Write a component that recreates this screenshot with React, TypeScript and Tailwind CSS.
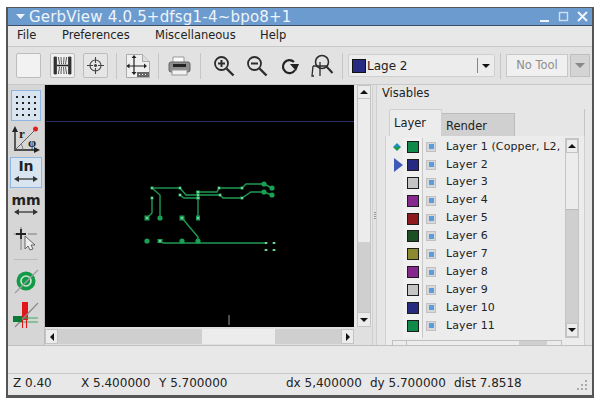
import React from 'react';

const FONT = "font-['DejaVu_Sans',sans-serif]";

const layers = [
  { name: 'Layer 1 (Copper, L2,', color: '#0f8a4a' },
  { name: 'Layer 2', color: '#262a80' },
  { name: 'Layer 3', color: '#c4c4c4' },
  { name: 'Layer 4', color: '#852a8c' },
  { name: 'Layer 5', color: '#8c1a1e' },
  { name: 'Layer 6', color: '#1c4f24' },
  { name: 'Layer 7', color: '#8c8a30' },
  { name: 'Layer 8', color: '#852a8c' },
  { name: 'Layer 9', color: '#c4c4c4' },
  { name: 'Layer 10', color: '#262a80' },
  { name: 'Layer 11', color: '#0f8a4a' },
  { name: 'Layer 12', color: '#222222' },
];

const traces = [
  '153,188 181,188',
  '153,188 161,195 161,218',
  '153,198 153,213 148,218',
  '181,188 187,195 221,195',
  '181,195 185,198 199,198',
  '199,192 218,192 220,188 243,188 247,184 265,184 273,188',
  '199,192 199,218',
  '221,195 224,198 243,198 252,192 265,192 273,195',
  '183,218 199,237 199,241',
  '161,241 164,243 267,243',
];

const roundPads = [[265, 184, 2.6], [273, 188, 2.6], [265, 192, 2.6], [273, 195, 2.6], [148, 241, 2.6], [183, 241, 2.6], [199, 241, 2.6], [161, 218, 2.6]];
const squarePads = [[148, 218, 5, 5], [183, 218, 5, 5], [199, 218, 4, 5], [161, 241, 5, 4], [153, 188, 3, 3], [181, 188, 3, 3], [181, 195, 3, 3], [153, 198, 3, 3], [199, 192, 4, 3], [199, 195, 3, 3], [199, 198, 4, 3], [221, 195, 3, 3], [220, 188, 3, 3], [243, 188, 3, 3], [243, 198, 3, 3], [267, 243, 3, 2], [275, 243, 3, 2], [267, 250, 3, 2], [275, 250, 3, 2]];

const Arrow = ({ dir }: { dir: 'up' | 'down' | 'left' | 'right' }) => {
  const points = { up: '0,6 4,2 8,6', down: '0,2 8,2 4,6', left: '6,0 6,8 2,4', right: '2,0 2,8 6,4' }[dir];
  return (
    <svg width="8" height="8" viewBox="0 0 8 8">
      <polygon points={points} fill="#111" />
    </svg>
  );
};

const ScrollBtn = ({ dir, className }: { dir: 'up' | 'down' | 'left' | 'right'; className: string }) => (
  <div className={`flex items-center justify-center shrink-0 bg-[#ececec] border border-[#c4c4c4] ${className}`}>
    <Arrow dir={dir} />
  </div>
);

const Sep = () => <div className="w-px h-[26px] bg-[#c6c6c6] shrink-0" />;

const TopToolbar = () => (
  <div className="h-[38px] shrink-0 flex items-center pl-[8px] bg-[#e2e2e2] border-b border-[#c8c8c8]">
    <div className="w-[25px] h-[25px] bg-[#f2f2f2] border border-[#bdbdbd] rounded-[2px]" />
    <div className="ml-[9px] w-[25px] h-[25px] bg-[#f0f0f0] border border-[#bdbdbd] rounded-[2px] flex items-center justify-center">
      <svg width="21" height="21" viewBox="0 0 21 21" fill="none" stroke="#333" strokeWidth="0.800">
        <path d="M2 2h2.500v17H2z" fill="#333" />
        <path d="M16.500 2H19v17h-2.500z" fill="#333" />
        <path d="M5 10.500h11" strokeWidth="1.600" stroke="#222" />
        <path d="M6.500 2c0 3 1 5 1 7M9 2c0 3 .500 5 .500 7M12 2c0 3-.500 5-.500 7M14.500 2c0 3-1 5-1 7" />
        <path d="M6.500 19c0-3 1-5 1-7M9 19c0-3 .500-5 .500-7M12 19c0-3-.500-5-.500-7M14.500 19c0-3-1-5-1-7" />
      </svg>
    </div>
    <div className="ml-[8px] w-[25px] h-[25px] bg-[#e6e6e6] border border-[#bdbdbd] rounded-[2px] flex items-center justify-center">
      <svg width="19" height="19" viewBox="0 0 19 19" fill="none" stroke="#444" strokeWidth="1.100">
        <circle cx="9.500" cy="9.500" r="5.500" />
        <path d="M9.500 1v6M9.500 12v6M1 9.500h6M12 9.500h6" />
        <circle cx="9.500" cy="9.500" r="1" fill="#444" />
      </svg>
    </div>
    <div className="ml-[8px] mr-[8px]"><Sep /></div>
    <svg className="shrink-0" width="26" height="26" viewBox="0 0 26 26" fill="none">
      <path d="M1.500 1.500h16l7 7v16h-23z" fill="#f0f0f0" stroke="#aaa" />
      <path d="M17.500 1.500v7h7" fill="#ddd" stroke="#aaa" />
      <path d="M9 3v18M2 13h19" stroke="#222" strokeWidth="1.200" />
      <path d="M9 2l-2.500 3h5zM9 22l-2.500-3h5zM1.500 13l3-2.500v5zM22 13l-3-2.500v5z" fill="#222" />
      <rect x="12" y="19" width="12" height="5" fill="#666" />
      <path d="M14 21.500h1M17 21.500h1M20 21.500h1" stroke="#fff" />
    </svg>
    <div className="ml-[7px] mr-[9px]"><Sep /></div>
    <svg className="shrink-0" width="23" height="22" viewBox="0 0 23 22">
      <path d="M5 2h11v6H5z" fill="#fafafa" stroke="#999" />
      <rect x="1" y="7" width="21" height="10" rx="2" fill="#8d8d8d" stroke="#666" />
      <rect x="5" y="9" width="13" height="3" fill="#222" />
      <rect x="4" y="15" width="15" height="5" fill="#f2f2f2" stroke="#999" />
    </svg>
    <div className="ml-[9px] mr-[12px]"><Sep /></div>
    <svg className="shrink-0" width="22" height="22" viewBox="0 0 22 22" fill="none" stroke="#2c2c2c">
      <circle cx="8.500" cy="8.500" r="6.500" strokeWidth="1.800" />
      <path d="M13.500 13.500l7 7" strokeWidth="2.400" />
      <path d="M5 8.500h7M8.500 5v7" strokeWidth="2" />
    </svg>
    <div className="w-[11px] shrink-0" />
    <svg className="shrink-0" width="22" height="22" viewBox="0 0 22 22" fill="none" stroke="#2c2c2c">
      <circle cx="8.500" cy="8.500" r="6.500" strokeWidth="1.800" />
      <path d="M13.500 13.500l7 7" strokeWidth="2.400" />
      <path d="M5 8.500h7" strokeWidth="2" />
    </svg>
    <div className="w-[12px] shrink-0" />
    <svg className="shrink-0" width="20" height="20" viewBox="0 0 20 20" fill="none">
      <path d="M15 14a6.500 6.500 0 1 1-1-8" stroke="#222" strokeWidth="2.200" />
      <path d="M10 8h9l-3 7z" fill="#222" />
    </svg>
    <div className="w-[10px] shrink-0" />
    <svg className="shrink-0" width="24" height="26" viewBox="0 0 24 26" fill="none" stroke="#2c2c2c">
      <circle cx="12" cy="9" r="6.500" strokeWidth="1.600" />
      <path d="M16.500 13.500l6 6.500" strokeWidth="2" />
      <path d="M3 13l-1 10h2M3 13h14M10 9v14" strokeWidth="1.300" />
    </svg>
    <div className="ml-[8px] mr-[5px]"><Sep /></div>
    <div className="w-[147px] h-[23px] shrink-0 bg-[#ececec] border border-[#cfcfcf] flex items-center pl-[3px] rounded-[2px]">
      <div className="w-[14px] h-[14px] bg-[#262a80] border border-[#111]" />
      <span className="text-[12px] text-[#222] ml-[1px]">Lage 2</span>
      <div className="ml-auto w-px h-[15px] bg-[#888]" />
      <div className="w-[16px] flex justify-center"><Arrow dir="down" /></div>
    </div>
    <div className="ml-[5px] mr-[5px]"><Sep /></div>
    <div className="w-[62px] h-[23px] shrink-0 bg-[#f0f0f0] border border-[#c8c8c8] flex items-center justify-center text-[11.500px] text-[#8e8e8e]">No Tool</div>
    <div className="ml-[2px] w-[20px] h-[23px] shrink-0 bg-[#d4d4d4] border border-[#c0c0c0] flex items-center justify-center">
      <svg width="10" height="8" viewBox="0 0 10 8"><polygon points="0,1 10,1 5,6" fill="#888" /></svg>
    </div>
  </div>
);

const LeftToolbar = () => (
  <div className="w-[37px] shrink-0 bg-[#d6d6d6] flex flex-col items-center pt-[5px] border-r border-[#bbb]">
    <div className="w-[30px] h-[31px] bg-[#d8e4f0] border border-[#8db6e0] flex items-center justify-center">
      <svg width="22" height="22" viewBox="0 0 22 22" fill="#222">
        {[2, 8, 14, 20].flatMap(y => [2, 8, 14, 20].map(x => <rect key={`${x}-${y}`} x={x - 1} y={y - 1} width="2" height="2" />))}
      </svg>
    </div>
    <svg className="mt-[3px]" width="30" height="31" viewBox="0 0 30 31" fill="none">
      <path d="M4 27V5M4 26h22" stroke="#222" strokeWidth="1.400" />
      <path d="M4 2L1 8h6zM29 26l-6-3v6z" fill="#222" />
      <path d="M4 26L24 6" stroke="#666" strokeWidth="1" />
      <path d="M12 26a9 9 0 0 0-2-6" stroke="#666" strokeWidth="0.800" />
      <circle cx="24.500" cy="5" r="2.500" fill="#e02020" />
      <text x="8" y="14" fontSize="13" fontWeight="700" fill="#222" fontFamily="'Liberation Serif',serif">r</text>
      <text x="17" y="23" fontSize="13" fontWeight="700" fill="#222" fontFamily="'Liberation Serif',serif">φ</text>
    </svg>
    <div className="mt-[2px] w-[32px] h-[31px] bg-[#d8e4f0] border border-[#8db6e0] flex flex-col items-center">
      <span className="text-[14px] leading-[17px] font-bold text-[#222]">In</span>
      <svg width="24" height="8" viewBox="0 0 24 8"><path d="M3 4h18" stroke="#333" strokeWidth="1.300" /><path d="M0 4l5-3v6zM24 4l-5-3v6z" fill="#333" /></svg>
    </div>
    <div className="mt-[5px] flex flex-col items-center">
      <span className="text-[14px] leading-[15px] font-bold text-[#222]">mm</span>
      <svg width="24" height="8" viewBox="0 0 24 8"><path d="M3 4h18" stroke="#333" strokeWidth="1.300" /><path d="M0 4l5-3v6zM24 4l-5-3v6z" fill="#333" /></svg>
    </div>
    <svg className="mt-[10px]" width="26" height="26" viewBox="0 0 26 26" fill="none">
      <path d="M1 8h7M15 8h9M8 1v5M8 12v12" stroke="#999" strokeWidth="1.400" />
      <path d="M3 8h10M8 3v10" stroke="#222" strokeWidth="1.800" />
      <path d="M12 10v13l3-3 2 4 3-1-2-4h4z" fill="#eee" stroke="#666" />
    </svg>
    <div className="mt-[7px] w-[24px] h-px bg-[#bcbcbc]" />
    <svg className="mt-[8px]" width="26" height="26" viewBox="0 0 26 26" fill="none">
      <circle cx="13" cy="13" r="9.500" fill="#129a48" />
      <circle cx="13" cy="13" r="5" stroke="#cfe6d4" strokeWidth="1.600" />
      <circle cx="13" cy="13" r="2.500" fill="#129a48" />
      <path d="M2 25L25 2" stroke="#a0a0a0" strokeWidth="1.200" />
    </svg>
    <svg className="mt-[7px]" width="28" height="28" viewBox="0 0 28 28" fill="none">
      <rect x="10" y="1" width="6" height="18" fill="#e0181c" />
      <path d="M3 26L26 2" stroke="#8c8c8c" strokeWidth="1.200" />
      <path d="M6 17h20M6 21h20" stroke="#3aa858" strokeWidth="1.200" />
      <rect x="1" y="15" width="9" height="6" fill="#0a7a38" />
      <path d="M10.500 19v8M14.500 19v8" stroke="#e0181c" strokeWidth="1.100" />
    </svg>
  </div>
);

const Canvas = () => (
  <div className="h-[242px] bg-black relative">
    <svg width="309" height="242" viewBox="46 85 309 242" className="block">
      <path d="M47 121.500h308" stroke="#2e2e6a" strokeWidth="1" />
      {traces.map(p => <polyline key={p} points={p} fill="none" stroke="#1f9a52" strokeWidth="1.400" />)}
      {roundPads.map(([x, y, r]) => <circle key={`${x}-${y}`} cx={x} cy={y} r={r} fill="#18a055" />)}
      {squarePads.map(([x, y, w, h]) => (
        <g key={`${x}:${y}`}>
          <rect x={x - w / 2} y={y - h / 2} width={w} height={h} fill="#18a055" />
          <rect x={x - 1} y={y - 0.500} width="2" height="1" fill="#e4f6ea" />
        </g>
      ))}
      <path d="M230 315v10" stroke="#999" strokeWidth="1" />
    </svg>
  </div>
);

const LayerRow = ({ name, color, index }: { name: string; color: string; index: number }) => (
  <div className="h-[17.900px] shrink-0 flex items-center">
    <div className="w-[17px] shrink-0 flex justify-end">
      {index === 0 && (
        <svg className="mr-[2px]" width="8" height="8" viewBox="0 0 8 8"><polygon points="4,0 8,4 0,4" fill="#1f8fc0" /><polygon points="0,4 8,4 4,8" fill="#1a9a48" /></svg>
      )}
      {index === 1 && (
        <svg width="9" height="14" viewBox="0 0 9 14"><polygon points="0,0 9,7 0,14" fill="#4058b8" /></svg>
      )}
    </div>
    <div className="w-[20px] h-[18px] shrink-0 flex items-center justify-center bg-[#f0f0f0] border-r border-[#c8c8c8]">
      <div className="w-[12px] h-[12px] border-[1.500px] border-[#1c1c1c]" style={{ backgroundColor: color }} />
    </div>
    <div className="ml-[3px] w-[10px] h-[10px] shrink-0 bg-[#d8d8d8] border border-[#c0c0c0] flex items-center justify-center">
      <div className="w-[5px] h-[5px] bg-[#5a9ce0]" />
    </div>
    <span className="ml-[10px] text-[11px] text-[#222] whitespace-nowrap tracking-[0.1px]">{name}</span>
  </div>
);

const VisiblesPanel = () => (
  <div className="flex-1 flex flex-col bg-[#e6e6e6] pl-[8px] min-w-0 overflow-hidden">
    <div className="h-[24px] shrink-0 pt-[1px] text-[11.500px] leading-[15px] text-[#222] -ml-[3px]">Visables</div>
    <div className="h-[27px] shrink-0 flex items-end pl-[4px] pr-[7px]">
      <div className="w-[53px] h-[27px] bg-[#ececec] border border-b-0 border-[#cfcfcf] rounded-t-[2px] text-[11.500px] leading-[26px] pl-[4px] text-[#222]">Layer</div>
      <div className="w-[73px] h-[23px] bg-[#d0d0d0] border-t border-r border-[#bcbcbc] text-[11.500px] leading-[24px] pl-[4px] text-[#222]">Render</div>
      <div className="flex-1 h-full border-r border-[#c4c4c4]" />
    </div>
    <div className="flex-1 min-h-0 flex flex-col bg-[#ececec] border-l border-r border-[#d0d0d0] mr-[7px]">
      <div className="flex-1 min-h-0 flex pt-[2px] pr-[5px]">
        <div className="flex-1 min-w-0 overflow-hidden flex flex-col">
          {layers.map((l, i) => <LayerRow key={l.name} name={l.name} color={l.color} index={i} />)}
        </div>
        <div className="w-[14px] shrink-0 flex flex-col border border-[#c4c4c4]">
          <ScrollBtn dir="up" className="h-[14px]" />
          <div className="h-[57px] bg-[#ececec] border-b border-[#bbb]" />
          <div className="flex-1 bg-[#cfcfcf]" />
          <ScrollBtn dir="down" className="h-[14px]" />
        </div>
      </div>
      <div className="h-[5px] mt-[2px] shrink-0 flex ml-[6px] mr-[22px] border-t border-x border-[#c0c0c0] overflow-hidden">
        <div className="w-[14px] border-r border-[#c0c0c0]" />
        <div className="w-[112px] bg-[#ececec]" />
        <div className="w-[28px] bg-[#cfcfcf]" />
      </div>
    </div>
  </div>
);

const StatusCell = ({ text, className }: { text: string; className: string }) => (
  <span className={`whitespace-nowrap ${className}`}>{text}</span>
);

export default function App() {
  return (
    <div className={`w-[600px] h-[404px] bg-white pt-[7px] pl-[6px] pr-[6px] pb-[6px] ${FONT}`}>
      <div className="w-full h-full flex flex-col border-x-2 border-t border-b-[3px] border-[#555] bg-[#e8e8e8] overflow-hidden">
        <div className="h-[18px] shrink-0 bg-[#6c9bcf] flex items-center border-b border-[#3d4f66]">
          <svg className="ml-[7px]" width="11" height="8" viewBox="0 0 11 8"><polygon points="1,1 10,1 5.500,6" fill="#eef4fb" /></svg>
          <span className="ml-[3px] mt-[1px] text-[15px] leading-[15px] text-[#eef4fb] tracking-[0.2px] whitespace-nowrap">GerbView 4.0.5+dfsg1-4~bpo8+1</span>
          <div className="ml-auto mr-[4px] flex items-center gap-[8px]">
            <svg width="11" height="11" viewBox="0 0 11 11"><path d="M1 10h9" stroke="#eef4fb" strokeWidth="2" /></svg>
            <svg width="11" height="11" viewBox="0 0 11 11" fill="none"><rect x="1.500" y="1.500" width="8" height="8" stroke="#cfdff0" strokeWidth="1.400" /></svg>
            <svg width="11" height="11" viewBox="0 0 11 11"><path d="M1 1l9 9M10 1l-9 9" stroke="#eef4fb" strokeWidth="2" /></svg>
          </div>
        </div>
        <div className="h-[21px] shrink-0 flex items-center bg-[#e8e8e8] border-b border-[#c8c8c8] text-[11.500px] text-[#222]">
          <span className="ml-[9px] w-[45px]">File</span>
          <span className="w-[93px]">Preferences</span>
          <span className="w-[105px]">Miscellaneous</span>
          <span>Help</span>
        </div>
        <TopToolbar />
        <div className="h-[260px] shrink-0 flex">
          <LeftToolbar />
          <div className="w-[327px] shrink-0 flex flex-col">
            <div className="h-[242px] flex">
              <div className="w-[309px] shrink-0"><Canvas /></div>
              <div className="w-[18px] flex flex-col pl-[3px] pr-[1px] bg-[#e8e8e8]">
                <ScrollBtn dir="up" className="h-[14px]" />
                <div className="h-[143px] bg-[#ececec] border-x border-[#c4c4c4]" />
                <div className="flex-1 bg-[#cfcfcf] border-x border-[#c4c4c4]" />
                <ScrollBtn dir="down" className="h-[15px]" />
              </div>
            </div>
            <div className="h-[18px] flex items-stretch pt-[2px] pb-[1px] pr-[18px] bg-[#e0e0e0]">
              <ScrollBtn dir="left" className="w-[13px]" />
              <div className="w-[144px] bg-[#cfcfcf]" />
              <div className="w-[73px] bg-[#ececec]" />
              <div className="flex-1 bg-[#cfcfcf]" />
              <ScrollBtn dir="right" className="w-[13px]" />
            </div>
          </div>
          <div className="w-[5px] shrink-0 bg-[#e2e2e2] border-x border-[#d0d0d0] flex flex-col items-center justify-center gap-[1px]">
            {[0, 1, 2, 3].map(i => <div key={i} className="w-[2px] h-[1px] bg-[#999]" />)}
          </div>
          <VisiblesPanel />
        </div>
        <div className="h-[28px] shrink-0 bg-[#e8e8e8] border-t border-[#c0c0c0]" />
        <div className="flex-1 flex items-center pb-[3px] border-t border-[#c8c8c8] text-[12px] text-[#222] relative">
          <StatusCell text="Z 0.40" className="ml-[5px] w-[68px]" />
          <StatusCell text="X 5.400000" className="w-[78px]" />
          <StatusCell text="Y 5.700000" className="w-[127px]" />
          <StatusCell text="dx 5,400000" className="w-[84px]" />
          <StatusCell text="dy 5.700000" className="w-[84px]" />
          <StatusCell text="dist 7.8518" className="" />
          <svg className="absolute right-[4px] bottom-[3px]" width="13" height="13" viewBox="0 0 13 13" fill="#aaa">
            <rect x="10" y="1" width="2" height="2" /><rect x="10" y="5" width="2" height="2" /><rect x="10" y="9" width="2" height="2" />
            <rect x="6" y="5" width="2" height="2" /><rect x="6" y="9" width="2" height="2" /><rect x="2" y="9" width="2" height="2" />
          </svg>
        </div>
      </div>
    </div>
  );
}
